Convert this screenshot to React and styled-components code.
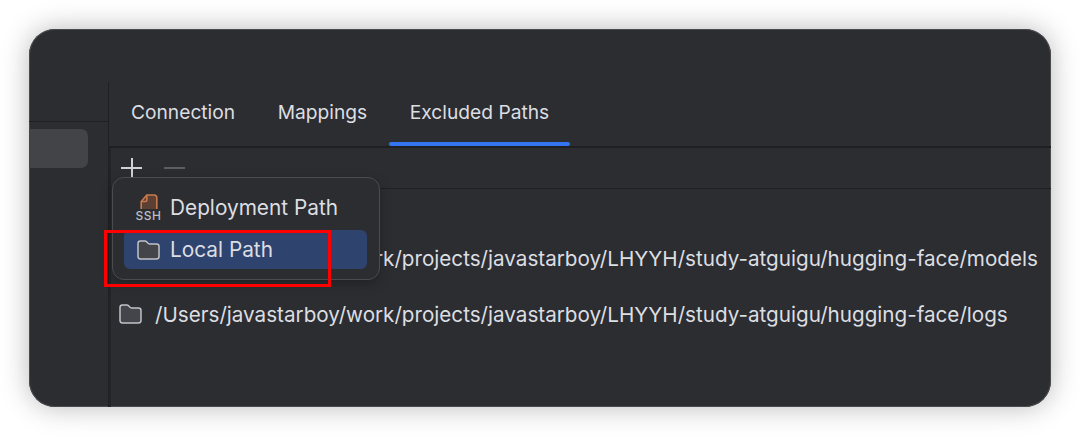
import styled, { createGlobalStyle } from "styled-components";

const GlobalStyle = createGlobalStyle`
  html, body {
    margin: 0;
    background: #ffffff;
  }
  body {
    font-family: Inter, "Liberation Sans", sans-serif;
  }
`;

const tabs = ["Connection", "Mappings", "Excluded Paths"];

const paths = [
  "/Users/javastarboy/work/projects/javastarboy/LHYYH/study-atguigu/hugging-face/models",
  "/Users/javastarboy/work/projects/javastarboy/LHYYH/study-atguigu/hugging-face/logs",
];

function FolderIcon() {
  return (
    <svg width="23" height="20" viewBox="0 0 23 20" fill="none">
      <path
        d="M1 3.4C1 2 2 1 3.4 1h4.4c.7 0 1.3.3 1.8.8l1.4 1.5c.4.4.8.6 1.4.6h7.2c1.4 0 2.4 1 2.4 2.4v10.3c0 1.4-1 2.4-2.4 2.4H3.4C2 18.9 1 17.9 1 16.5V3.4Z"
        fill="#43454a"
        stroke="#c0c2c7"
        strokeWidth="1.5"
      />
    </svg>
  );
}

function SshIcon() {
  return (
    <Ssh>
      <svg width="18" height="15" viewBox="0 0 18 15" fill="none">
        <path
          d="M1.2 15V7.5L6.8 1H14c1.7 0 2.8 1.1 2.8 2.8V15"
          stroke="#c97a4c"
          strokeWidth="1.6"
          fill="#5c4034"
        />
        <path d="M1.2 7.5h4.3c.8 0 1.3-.5 1.3-1.3V1" stroke="#c97a4c" strokeWidth="1.6" />
      </svg>
      <SshLabel>SSH</SshLabel>
    </Ssh>
  );
}

export default function App() {
  return (
    <>
      <GlobalStyle />
      <Page>
        <Window>
          <TitleBar />
          <Body>
            <Sidebar>
              <SidebarHeader />
              <SidebarItem />
            </Sidebar>
            <Main>
              <TabBar>
                {tabs.map((tab) => (
                  <Tab key={tab} $active={tab === "Excluded Paths"}>
                    {tab}
                  </Tab>
                ))}
              </TabBar>
              <Toolbar>
                <PlusIcon />
                <MinusIcon />
              </Toolbar>
              <PathList>
                {paths.map((path) => (
                  <PathRow key={path}>
                    <FolderIcon />
                    <span>{path}</span>
                  </PathRow>
                ))}
              </PathList>
              <Menu>
                <MenuItem>
                  <SshIcon />
                  Deployment Path
                </MenuItem>
                <MenuItem $selected>
                  <FolderIcon />
                  Local Path
                </MenuItem>
              </Menu>
              <RedMark />
            </Main>
          </Body>
        </Window>
      </Page>
    </>
  );
}

const Page = styled.div`
  width: 1080px;
  height: 437px;
  padding: 29px;
  box-sizing: border-box;
  overflow: hidden;
`;

const Window = styled.div`
  width: 1022px;
  height: 378px;
  display: flex;
  flex-direction: column;
  overflow: hidden;
  border-radius: 26px;
  background: #2c2d31;
  box-shadow: 0 0 28px rgba(0, 0, 0, 0.28), inset 0 0 0 1px #4a4b4f;
`;

const TitleBar = styled.div`
  height: 53px;
  flex: none;
`;

const Body = styled.div`
  flex: 1;
  display: flex;
  min-height: 0;
`;

const Sidebar = styled.div`
  width: 79px;
  flex: none;
  border-right: 1px solid #1f2023;
`;

const SidebarHeader = styled.div`
  height: 39px;
  border-bottom: 1px solid #1f2023;
`;

const SidebarItem = styled.div`
  height: 39px;
  width: 59px;
  margin-top: 7px;
  border-radius: 0 7px 7px 0;
  background: #434448;
`;

const Main = styled.div`
  flex: 1;
  min-width: 0;
  position: relative;
  display: flex;
  flex-direction: column;
`;

const TabBar = styled.div`
  height: 64px;
  flex: none;
  display: flex;
  padding-left: 1px;
  border-bottom: 2px solid #1f2023;
`;

const Tab = styled.div`
  position: relative;
  height: 64px;
  padding: 0 21px 4px;
  margin-right: 0.6px;
  display: flex;
  align-items: center;
  box-sizing: border-box;
  color: #dcdee2;
  font-size: 19.2px;

  &::after {
    content: "";
    display: ${(props) => (props.$active ? "block" : "none")};
    position: absolute;
    left: 0;
    right: 0;
    bottom: 0;
    height: 4px;
    border-radius: 2px;
    background: #3574f0;
  }
`;

const Toolbar = styled.div`
  height: 40px;
  flex: none;
  display: flex;
  align-items: center;
  gap: 22px;
  padding-left: 10px;
  border-left: 2px solid #232428;
  border-bottom: 1px solid #1f2023;
`;

const PlusIcon = styled.div`
  width: 21px;
  height: 21px;
  background:
    linear-gradient(#d0d2d6, #d0d2d6) center / 21px 2px no-repeat,
    linear-gradient(#d0d2d6, #d0d2d6) center / 2px 21px no-repeat;
`;

const MinusIcon = styled.div`
  width: 21px;
  height: 2px;
  background: #5c5d61;
`;

const PathList = styled.div`
  flex: 1;
  padding-top: 41px;
  border-left: 2px solid #232428;
`;

const PathRow = styled.div`
  height: 56px;
  display: flex;
  align-items: center;
  gap: 13px;
  padding-left: 8px;
  color: #dcdee2;
  font-size: 20.65px;
  white-space: nowrap;
`;

const Menu = styled.div`
  position: absolute;
  left: 3px;
  top: 95px;
  width: 268px;
  height: 103px;
  box-sizing: border-box;
  padding: 10px 12px 10px 11px;
  border: 1px solid #4b4c50;
  border-radius: 12px;
  background: #2c2d31;
  box-shadow: 0 4px 12px rgba(0, 0, 0, 0.25);
`;

const MenuItem = styled.div`
  height: 39px;
  margin-top: ${(props) => (props.$selected ? "3px" : "0")};
  display: flex;
  align-items: center;
  gap: 10px;
  padding-left: 13px;
  border-radius: 6px;
  color: #dcdee2;
  font-size: 20.8px;
  background: ${(props) => (props.$selected ? "#2e436e" : "transparent")};
`;

const Ssh = styled.div`
  width: 23px;
  display: flex;
  flex-direction: column;
  align-items: center;
  gap: 2px;
`;

const SshLabel = styled.div`
  color: #bcbec3;
  font-size: 12px;
  font-weight: 500;
  line-height: 10px;
  letter-spacing: 0.6px;
`;

const RedMark = styled.div`
  position: absolute;
  left: -5px;
  top: 148px;
  width: 227px;
  height: 57px;
  box-sizing: border-box;
  border: 3px solid #f00;
`;
